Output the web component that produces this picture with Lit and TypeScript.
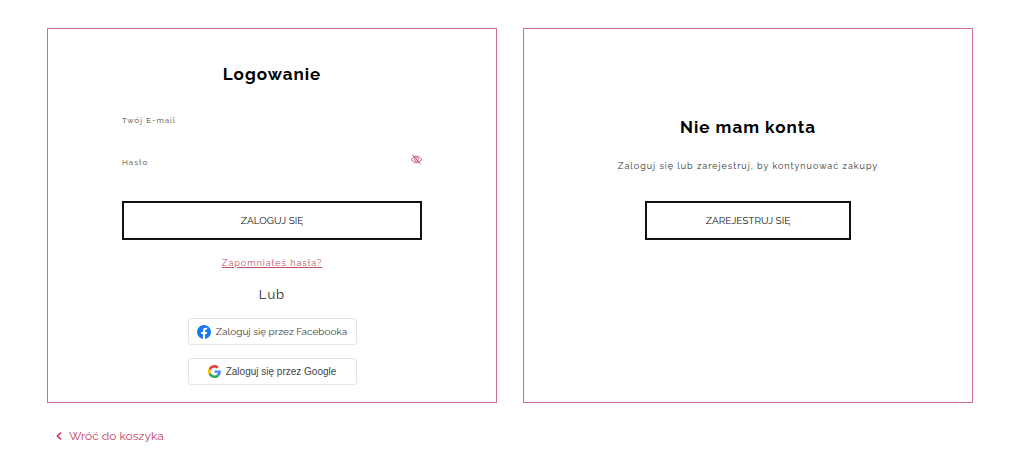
import { LitElement, html, css } from "lit";
import { customElement, state } from "lit/decorators.js";

@customElement("app-root")
export class AppRoot extends LitElement {
  @state() private visible = false;

  static styles = css`
    :host {
      display: block;
      padding: 28px 51px 16px 47px;
      background: #fff;
      color: #111;
      font-family: Raleway, Lato, sans-serif;
    }
    * {
      box-sizing: border-box;
    }
    .panels {
      display: grid;
      grid-template-columns: 1fr 1fr;
      gap: 26px;
    }
    .panel {
      display: flex;
      flex-direction: column;
      align-items: center;
      border: 1px solid #cf6f85;
      padding: 33px 74px 17px;
    }
    .register {
      padding-top: 86px;
    }
    .title {
      margin: 0;
      font-size: 17px;
      line-height: 24px;
      font-weight: 700;
      letter-spacing: 1px;
      color: #000;
    }
    .form {
      display: flex;
      flex-direction: column;
      align-self: stretch;
      padding-top: 23px;
    }
    .field {
      display: flex;
      align-items: center;
      height: 22px;
      margin-bottom: 20px;
      font-size: 8px;
      letter-spacing: 1px;
      color: #444;
    }
    .field input {
      flex: 1;
      min-width: 0;
      height: 22px;
      border: 0;
      outline: 0;
      background: transparent;
      font: inherit;
    }
    .eye {
      display: flex;
      padding: 3px 0 0;
      border: 0;
      background: none;
      color: #c22f50;
      cursor: pointer;
      align-self: flex-start;
    }
    .main-button {
      height: 39px;
      margin-top: 8px;
      border: 2px solid #111;
      background: #fff;
      color: #111;
      font: 400 10px/16px Raleway, Lato, sans-serif;
      text-transform: uppercase;
      cursor: pointer;
    }
    .register .main-button {
      width: 206px;
      margin-top: 27px;
    }
    .forgot {
      margin-top: 15px;
      font-size: 9px;
      line-height: 16px;
      letter-spacing: 1px;
      color: #c2506b;
    }
    .or {
      margin: 14px 0 13px;
      font-size: 13px;
      line-height: 20px;
      letter-spacing: 1px;
      color: #222;
    }
    .social {
      display: flex;
      align-items: center;
      justify-content: center;
      gap: 5px;
      width: 169px;
      height: 27px;
      padding: 0;
      border: 1px solid #e4e4e7;
      border-radius: 3px;
      background: #fff;
      color: #444;
      font: 400 10px/16px Raleway, Lato, sans-serif;
      cursor: pointer;
    }
    .social + .social {
      margin-top: 13px;
      font-family: "Liberation Sans", Arial, sans-serif;
    }
    .note {
      margin: 19px 0 0;
      font-size: 9px;
      line-height: 16px;
      letter-spacing: 1px;
      color: #333;
      text-align: center;
    }
    .back {
      display: inline-flex;
      align-items: center;
      gap: 7px;
      margin: 24px 0 0 9px;
      font-size: 12px;
      line-height: 18px;
      color: #c2405e;
      text-decoration: none;
    }
    svg {
      display: block;
      flex: none;
    }
  `;

  render() {
    return html`
      <main>
        <div class="panels">
          <section class="panel">
            <h1 class="title">Logowanie</h1>
            <form class="form" @submit=${(e: Event) => e.preventDefault()}>
              <div class="field">
                <label for="email">Twój E-mail</label>
                <input id="email" type="email" autocomplete="email" />
              </div>
              <div class="field">
                <label for="password">Hasło</label>
                <input id="password" type=${this.visible ? "text" : "password"} />
                <button
                  class="eye"
                  type="button"
                  aria-label="Pokaż hasło"
                  @click=${() => (this.visible = !this.visible)}
                >
                  <svg width="11" height="11" viewBox="0 0 24 24" fill="none" stroke="currentColor" stroke-width="1.8">
                    <path d="M1 12C4 7 8 5 12 5s8 2 11 7c-3 5-7 7-11 7S4 17 1 12Z" />
                    <circle cx="12" cy="12" r="4" />
                    <path d="M3 2l18 20" />
                  </svg>
                </button>
              </div>
              <button class="main-button" type="submit">Zaloguj się</button>
            </form>
            <a class="forgot" href="#">Zapomniałeś hasła?</a>
            <p class="or">Lub</p>
            <button class="social" type="button">
              <svg width="14" height="14" viewBox="0 0 24 24">
                <circle cx="12" cy="12" r="12" fill="#1877f2" />
                <path
                  fill="#fff"
                  d="M16.7 15.5l.5-3.5h-3.3V9.8c0-1 .5-1.9 2-1.9h1.5v-3s-1.4-.2-2.7-.2c-2.7 0-4.5 1.6-4.5 4.6V12H7.1v3.5h3.1v8.4a12 12 0 0 0 3.7 0v-8.4z"
                />
              </svg>
              <span>Zaloguj się przez Facebooka</span>
            </button>
            <button class="social" type="button">
              <svg width="13" height="13" viewBox="0 0 48 48">
                <path fill="#ea4335" d="M24 9.5c3.5 0 6.7 1.2 9.2 3.6l6.9-6.9C35.9 2.4 30.5 0 24 0 14.6 0 6.5 5.4 2.6 13.2l8 6.2C12.4 13.7 17.7 9.5 24 9.5z" />
                <path fill="#4285f4" d="M47 24.6c0-1.6-.2-3.1-.4-4.6H24v9h12.9c-.6 3-2.3 5.5-4.8 7.2l7.7 6C44.4 38 47 31.8 47 24.6z" />
                <path fill="#fbbc05" d="M10.5 28.6a14.5 14.5 0 0 1 0-9.2l-8-6.2a24 24 0 0 0 0 21.6z" />
                <path fill="#34a853" d="M24 48c6.5 0 11.9-2.1 15.9-5.8l-7.7-6c-2.2 1.5-4.9 2.3-8.2 2.3-6.3 0-11.6-4.2-13.5-9.9l-8 6.2C6.5 42.6 14.6 48 24 48z" />
              </svg>
              <span>Zaloguj się przez Google</span>
            </button>
          </section>

          <section class="panel register">
            <h2 class="title">Nie mam konta</h2>
            <p class="note">Zaloguj się lub zarejestruj, by kontynuować zakupy</p>
            <button class="main-button" type="button">Zarejestruj się</button>
          </section>
        </div>
        <a class="back" href="#">
          <svg width="6" height="8" viewBox="0 0 6 8" fill="none" stroke="currentColor" stroke-width="1.6">
            <path d="M5 .6L1.4 4 5 7.4" />
          </svg>
          <span>Wróć do koszyka</span>
        </a>
      </main>
    `;
  }
}
